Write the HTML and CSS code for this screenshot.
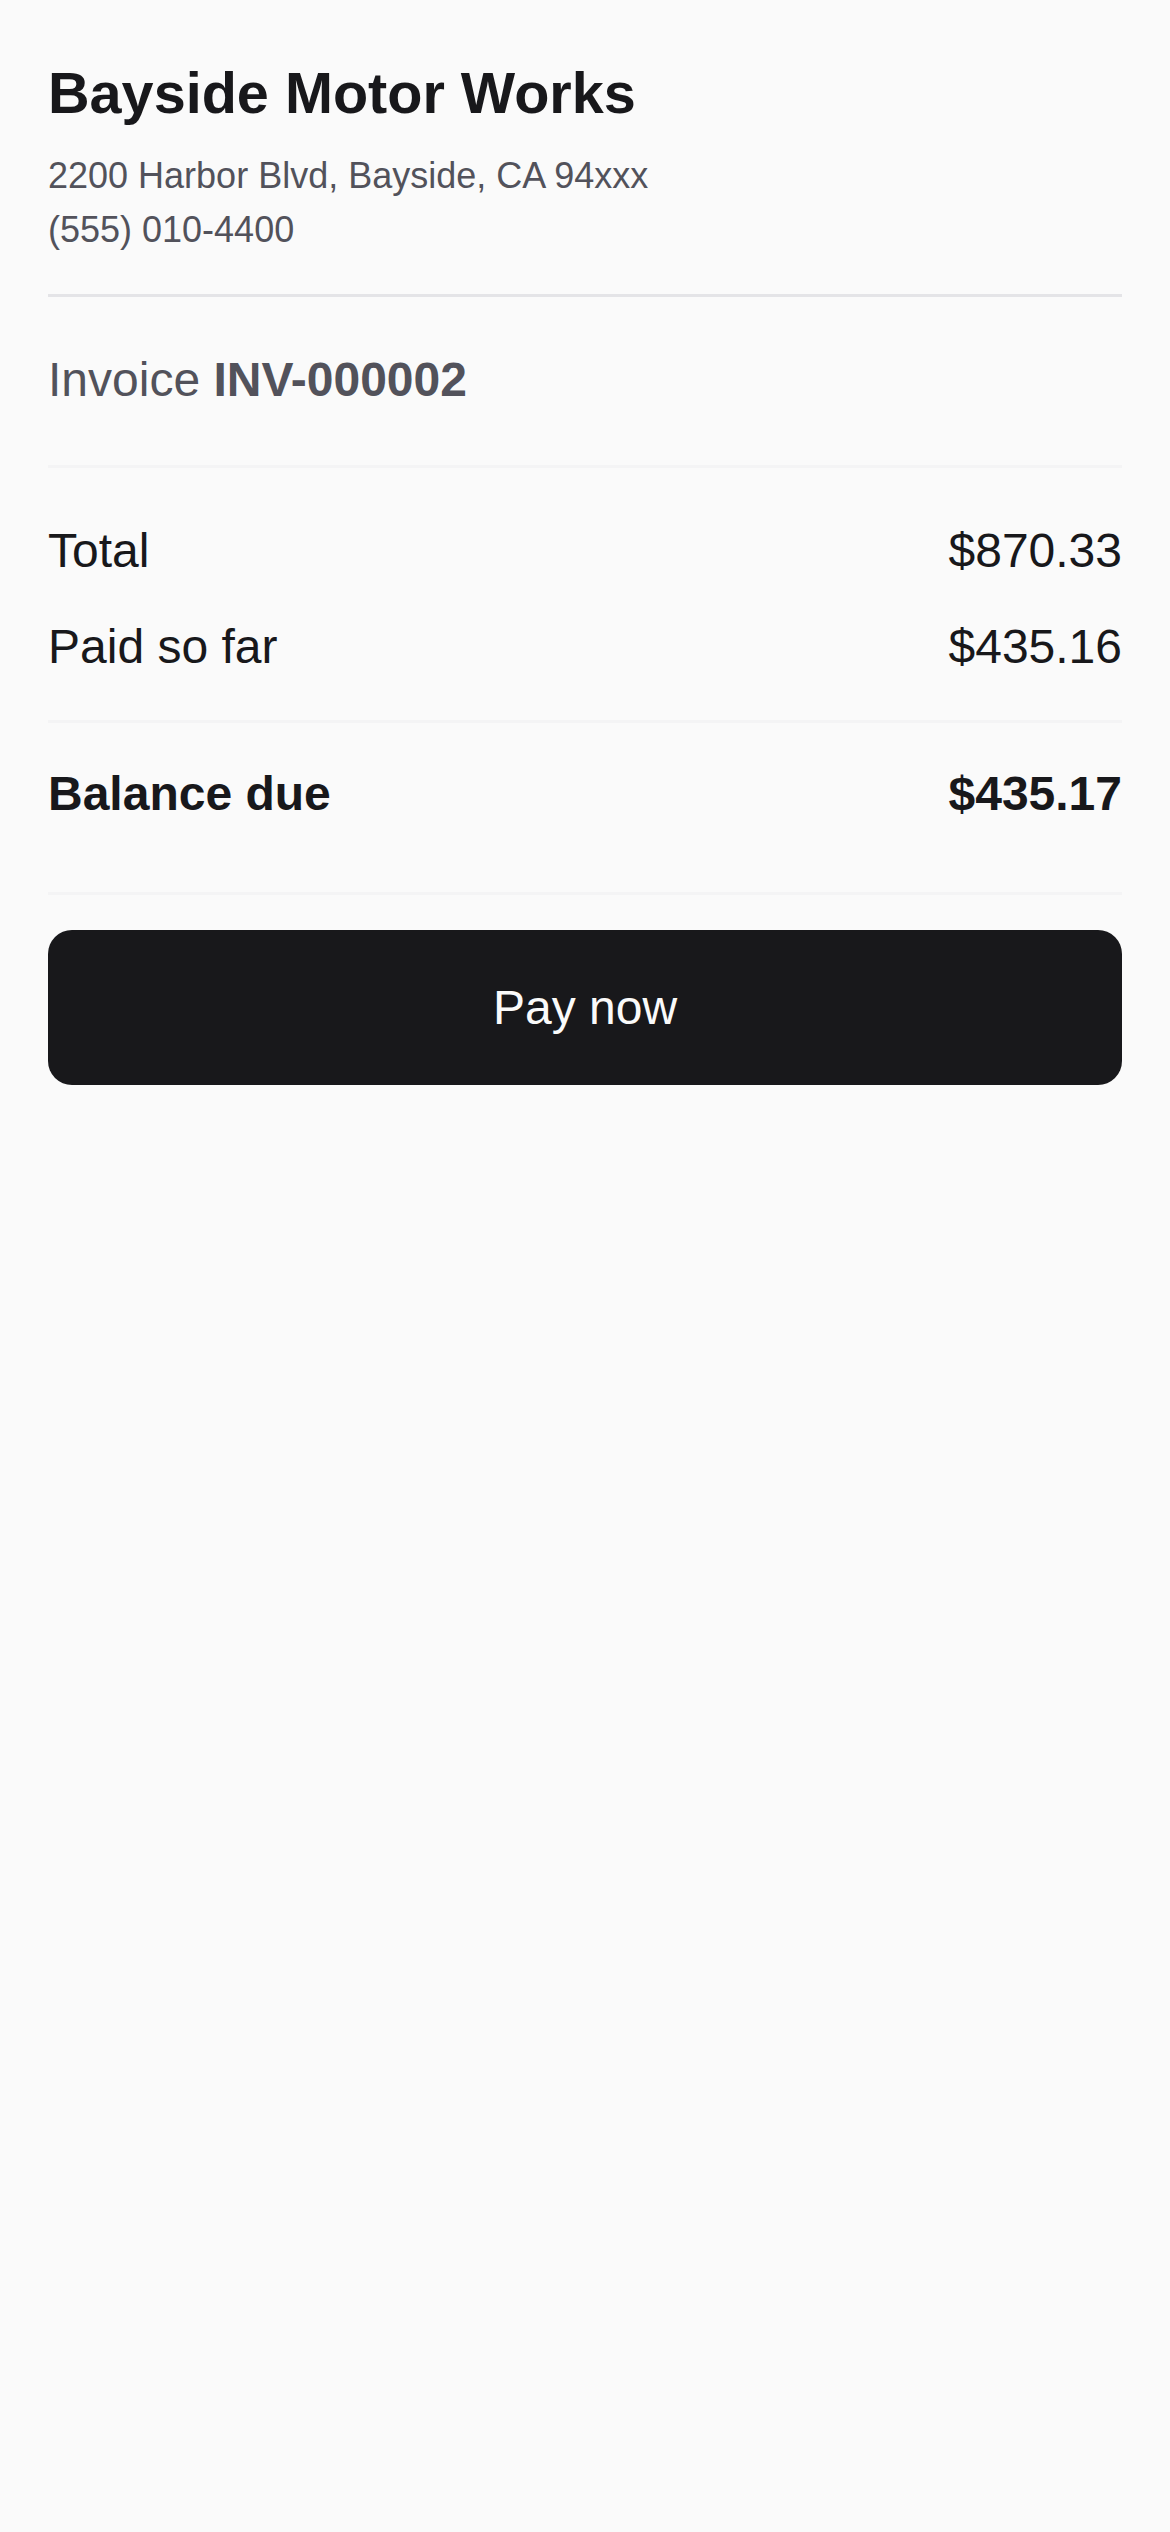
FILE: index.html
```html
<!DOCTYPE html>
<html lang="en">
<head>
    <meta charset="UTF-8">
    <meta name="viewport" content="width=device-width, initial-scale=1.0">
    <title>Invoice INV-000002</title>
    <link rel="stylesheet" href="styles.css">
</head>
<body>
    <main class="invoice">
        <header class="shop">
            <h1 class="shop-name">Bayside Motor Works</h1>
            <p class="shop-line">2200 Harbor Blvd, Bayside, CA 94xxx</p>
            <p class="shop-line">(555) 010-4400</p>
        </header>
        <section class="inv-num">
            Invoice <strong>INV-000002</strong>
        </section>
        <section class="totals">
            <div class="row">
                <span>Total</span>
                <span>$870.33</span>
            </div>
            <div class="row">
                <span>Paid so far</span>
                <span>$435.16</span>
            </div>
        </section>
        <section class="balance">
            <div class="row">
                <span>Balance due</span>
                <span>$435.17</span>
            </div>
        </section>
        <button class="pay" type="button">Pay now</button>
    </main>
</body>
</html>
```

FILE: styles.css
```css
@charset "UTF-8";
*{
    box-sizing: border-box;
    margin: 0;
    padding: 0;
}
body{
    background-color: #fafafa;
    color: #18181b;
    font-family: "Liberation Sans", Arial, sans-serif;
}
.invoice{
    display: flex;
    flex-direction: column;
    padding: 59px 48px;
}
.shop{
    padding-bottom: 37px;
    border-bottom: 3px solid #e4e4e7;
}
.shop-name{
    font-size: 57.6px;
    line-height: 1.2;
    font-weight: 700;
    color: #18181b;
    margin-bottom: 21px;
}
.shop-line{
    font-size: 36px;
    line-height: 54px;
    color: #52525b;
}
.inv-num{
    padding: 47px 0 49px;
    font-size: 48px;
    line-height: 72px;
    color: #52525b;
    border-bottom: 3px solid #f4f4f5;
}
.inv-num strong{
    font-weight: 700;
}
.totals{
    display: flex;
    flex-direction: column;
    gap: 24px;
    padding: 47px 0 37px;
    border-bottom: 3px solid #f4f4f5;
}
.row{
    display: flex;
    justify-content: space-between;
    align-items: center;
    font-size: 48px;
    line-height: 72px;
}
.balance{
    padding: 35px 0 62px;
    border-bottom: 3px solid #f4f4f5;
}
.balance .row{
    font-weight: 700;
}
.pay{
    margin-top: 35px;
    width: 100%;
    padding: 41.5px 0;
    border: none;
    border-radius: 24px;
    background-color: #18181b;
    color: #fafafa;
    font-family: inherit;
    font-size: 48px;
    line-height: 72px;
    cursor: pointer;
}
```
